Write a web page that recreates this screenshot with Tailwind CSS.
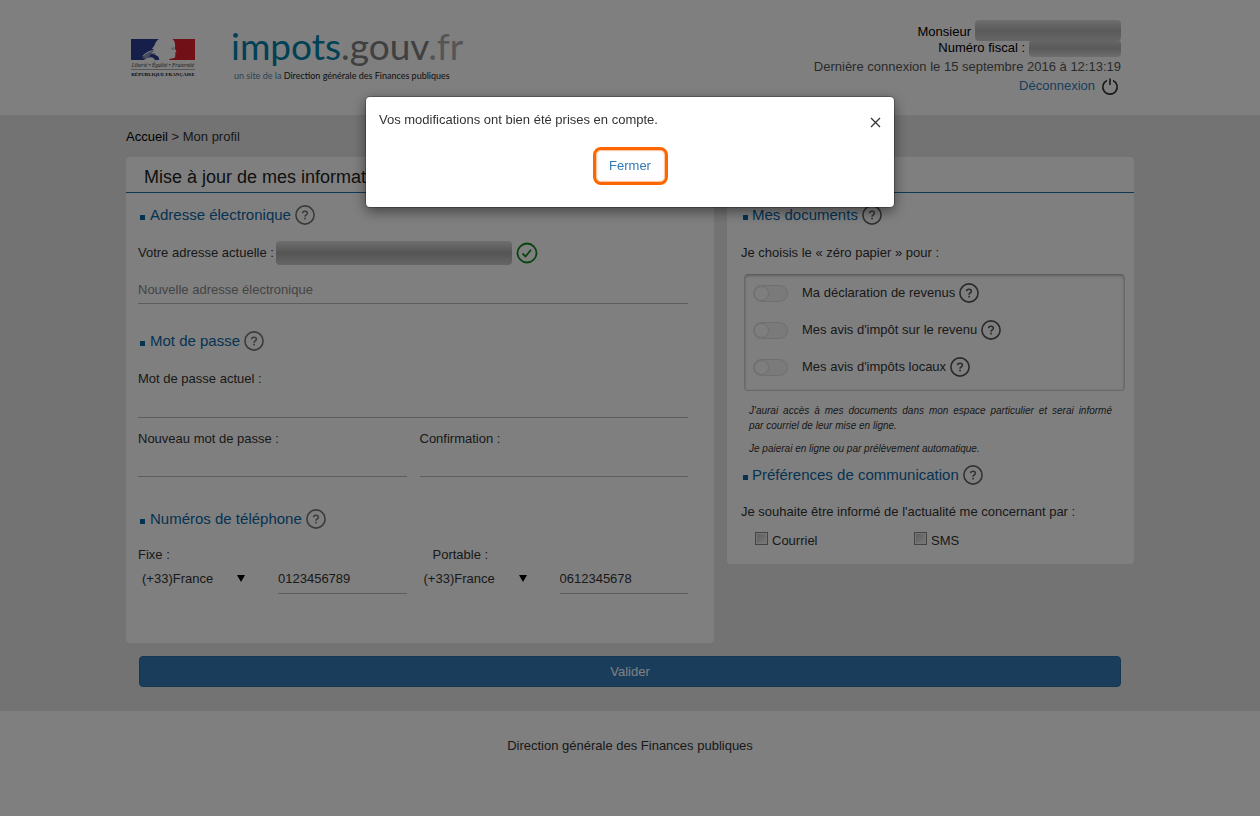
<!DOCTYPE html>
<html lang="fr">
<head>
<meta charset="utf-8">
<meta name="viewport" content="width=device-width, initial-scale=1">
<title>impots.gouv.fr - Mon profil</title>
<script src="https://cdn.jsdelivr.net/npm/@tailwindcss/browser@4"></script>
</head>
<body class="min-h-screen bg-white font-['Liberation_Sans',Arial,sans-serif] text-[13px] leading-5 text-[#333]">

<svg class="hidden" aria-hidden="true">
  <symbol id="help" viewBox="0 0 20 20">
    <circle cx="10" cy="10" r="9.100" fill="none" stroke="currentColor" stroke-width="1.600"/>
    <path d="M7.600 8.300c0-1.300 1-2.100 2.400-2.100s2.400.8 2.400 2c0 .9-.5 1.300-1.200 1.800-.8.5-1.200.9-1.200 1.800" fill="none" stroke="currentColor" stroke-width="1.500"/>
    <rect x="9.200" y="12.800" width="1.700" height="1.600" fill="currentColor"/>
  </symbol>
</svg>

<header class="h-[115px] bg-white">
  <div class="mx-auto flex max-w-[1008px] justify-between">
    <a href="#" class="flex pl-1 pt-6" aria-label="impots.gouv.fr">
      <svg class="mt-[14px] h-[42px] w-[68px] shrink-0" viewBox="0 0 68 42" role="img" aria-label="République Française">
        <path d="M1 1H29C26.500 2.500 25 5 24.500 7.500L22 10.500L24 12L21 12.500C18 13 15 15.500 12 18.500L16 17.500L13 20.500L17 19.500L14 22H1Z" fill="#2c3f92"/>
        <path d="M12.500 19.500C16 15 20 13 24.500 12.500L21 15.500L26 15L22 17.500L28 18.500L29 22H25L22 19.500L15 20.500Z" fill="#8b97c4"/>
        <path d="M21 16l4 .5 3.500 2.500.8 3h-4l-1.800-2.500-4.500-1z" fill="#2c3f92"/>
        <path d="M42.500 1H65V22H39C39.500 21 41 20.500 43 20.300C45 20 45.500 19 45.200 17.500L45.500 16L45 15L46.500 13.500L44.700 10.500L45.200 8C45.200 5 44.500 2.500 42.500 1Z" fill="#e2202c"/>
        <path d="M41.500 10.500l2.300-.7M42.500 11.500l1 .2" fill="none" stroke="#666" stroke-width=".7"/>
        <text x="33" y="29" text-anchor="middle" font-family="Liberation Serif, serif" font-style="italic" font-size="5.400" fill="#333">Liberté • Égalité • Fraternité</text>
        <path d="M1 31.500H65" stroke="#777" stroke-width=".6"/>
        <text x="33" y="38" text-anchor="middle" font-family="Liberation Serif, serif" font-weight="bold" font-size="5" fill="#111">RÉPUBLIQUE FRANÇAISE</text>
      </svg>
      <span class="ml-[33px] block font-['Lato',sans-serif]">
        <span class="block whitespace-nowrap text-[37px] leading-[44px] text-[#808080]"><span class="text-[#0082ad]">impots</span>.gouv<span class="text-[#aaa]">.fr</span></span>
        <span class="block whitespace-nowrap pl-[3px] text-[9px] leading-4 text-[#222]"><span class="text-[#5d87ad]">un site de la</span> Direction générale des Finances publiques</span>
      </span>
    </a>
    <div class="flex flex-col items-end pt-6 pr-[13px] leading-4">
      <p class="flex text-black">Monsieur <span class="-mt-1 ml-1 h-[21px] w-[146px] rounded-sm bg-linear-to-b from-[#ddd] via-[#b5b5b5] to-[#ccc]"></span></p>
      <p class="-mt-px flex text-black">Numéro fiscal : <span class="ml-1 h-[17px] w-[92px] rounded-sm bg-linear-to-b from-[#ccc] via-[#b5b5b5] to-[#ddd]"></span></p>
      <p class="mt-0.5 leading-4 text-[#555]">Dernière connexion le 15 septembre 2016 à 12:13:19</p>
      <a href="#" class="mt-px flex items-center gap-1.5 pr-0.5 leading-5 text-[#337ab7]">Déconnexion
        <svg class="mt-0.5 size-[18px]" viewBox="0 0 18 18" fill="none" stroke="#333" stroke-width="1.600" aria-hidden="true"><path d="M6 2.400A7.200 7.200 0 1 0 12 2.400M9 .5V7"/></svg>
      </a>
    </div>
  </div>
</header>

<main class="bg-[#e6e6e6] pt-3 pb-6">
  <form class="mx-auto max-w-[1008px]">
    <nav><a href="#" class="text-black">Accueil</a> &gt; Mon profil</nav>
    <h1 class="mt-2.5 rounded-t bg-white pt-2 pb-[3px] pl-[18px] text-[18px] leading-6 text-[#222]">Mise à jour de mes informations</h1>
    <div class="h-px bg-[#1a72ad]"></div>

    <div class="grid grid-cols-[588fr_407fr] items-start gap-x-[13px]">
      <section class="rounded-b bg-white pt-3 pr-[26px] pb-[49px] pl-3">
        <h2 class="flex items-center text-[15px] text-[#0b66a3]"><span class="mt-1 mr-[5px] ml-0.5 size-[5px] bg-[#0b66a3]"></span>Adresse électronique<button type="button" class="ml-1 text-[#777]" aria-label="Aide"><svg class="size-5"><use href="#help"/></svg></button></h2>
        <div class="mt-4 flex items-center">Votre adresse actuelle :<span class="ml-0.5 h-6 w-[236px] rounded bg-linear-to-b from-[#ddd] via-[#aaa] to-[#ccc]"></span>
          <svg class="ml-1 size-[22px]" viewBox="0 0 22 22" fill="none" stroke="#118a1c" stroke-width="1.800" role="img" aria-label="Adresse valide"><circle cx="11" cy="11" r="9.500"/><path d="M6.500 11.500l3 3L15 7.800"/></svg>
        </div>
        <input type="email" aria-label="Nouvelle adresse électronique" placeholder="Nouvelle adresse électronique" class="mt-3 block h-[27px] w-full border-b border-[#bbb] pb-0.5 placeholder:text-[#888]">

        <h2 class="mt-[27px] flex items-center text-[15px] text-[#0b66a3]"><span class="mt-1 mr-[5px] ml-0.5 size-[5px] bg-[#0b66a3]"></span>Mot de passe<button type="button" class="ml-1 text-[#777]" aria-label="Aide"><svg class="size-5"><use href="#help"/></svg></button></h2>
        <label for="pw" class="mt-[18px] block">Mot de passe actuel :</label>
        <input id="pw" type="password" class="block h-[29px] w-full border-b border-[#bbb]">
        <div class="mt-[11px] grid grid-cols-2 gap-x-[13px]">
          <div><label for="pw1" class="block">Nouveau mot de passe :</label><input id="pw1" type="password" class="block h-7 w-full border-b border-[#bbb]"></div>
          <div><label for="pw2" class="block">Confirmation :</label><input id="pw2" type="password" class="block h-7 w-full border-b border-[#bbb]"></div>
        </div>

        <h2 class="mt-8 flex items-center text-[15px] text-[#0b66a3]"><span class="mt-1 mr-[5px] ml-0.5 size-[5px] bg-[#0b66a3]"></span>Numéros de téléphone<button type="button" class="ml-1 text-[#777]" aria-label="Aide"><svg class="size-5"><use href="#help"/></svg></button></h2>
        <div class="mt-4 grid grid-cols-2 gap-x-[13px]">
          <div>
            <label for="fixe" class="block">Fixe :</label>
            <div class="flex">
              <div class="relative w-[140px]">
                <select aria-label="Indicatif fixe" class="h-7 w-full appearance-none pl-1"><option>(+33)France</option></select>
                <svg class="pointer-events-none absolute top-2.5 left-[99px] h-[7px] w-2" viewBox="0 0 8 7" aria-hidden="true"><path d="M0 0H8L4 7Z" fill="#000"/></svg>
              </div>
              <input id="fixe" type="tel" value="0123456789" class="h-[29px] min-w-0 flex-1 border-b border-[#bbb] pb-0.5">
            </div>
          </div>
          <div>
            <label for="mob" class="block pl-[13px]">Portable :</label>
            <div class="flex">
              <div class="relative w-[140px]">
                <select aria-label="Indicatif portable" class="h-7 w-full appearance-none pl-1"><option>(+33)France</option></select>
                <svg class="pointer-events-none absolute top-2.5 left-[99px] h-[7px] w-2" viewBox="0 0 8 7" aria-hidden="true"><path d="M0 0H8L4 7Z" fill="#000"/></svg>
              </div>
              <input id="mob" type="tel" value="0612345678" class="h-[29px] min-w-0 flex-1 border-b border-[#bbb] pb-0.5">
            </div>
          </div>
        </div>
      </section>

      <section class="rounded-b bg-white pt-3 pr-[9px] pb-[13px] pl-[14px]">
        <h2 class="flex items-center text-[15px] text-[#0b66a3]"><span class="mt-1 mr-1 ml-0.5 size-[5px] bg-[#0b66a3]"></span>Mes documents<button type="button" class="ml-1 text-[#666]" aria-label="Aide"><svg class="size-5"><use href="#help"/></svg></button></h2>
        <p class="mt-[18px]">Je choisis le « zéro papier » pour :</p>
        <div class="mt-[11px] ml-[3px] flex flex-col gap-[17px] rounded-sm border border-[#d0d0d0] border-t-[#bbb] pt-2 pb-[13px] pl-2 shadow-[inset_0_1px_3px_0_#bbb]">
          <div class="flex items-center"><input id="t1" type="checkbox" role="switch" class="h-[17px] w-[35px] appearance-none rounded-full border border-[#dedede] bg-[#f4f4f4] before:block before:size-[15px] before:rounded-full before:border before:border-[#dedede] before:bg-[#fdfdfd]"><label for="t1" class="ml-[14px]">Ma déclaration de revenus</label><button type="button" class="ml-1 text-[#555]" aria-label="Aide"><svg class="size-5"><use href="#help"/></svg></button></div>
          <div class="flex items-center"><input id="t2" type="checkbox" role="switch" class="h-[17px] w-[35px] appearance-none rounded-full border border-[#dedede] bg-[#f4f4f4] before:block before:size-[15px] before:rounded-full before:border before:border-[#dedede] before:bg-[#fdfdfd]"><label for="t2" class="ml-[14px]">Mes avis d'impôt sur le revenu</label><button type="button" class="ml-1 text-[#555]" aria-label="Aide"><svg class="size-5"><use href="#help"/></svg></button></div>
          <div class="flex items-center"><input id="t3" type="checkbox" role="switch" class="h-[17px] w-[35px] appearance-none rounded-full border border-[#dedede] bg-[#f4f4f4] before:block before:size-[15px] before:rounded-full before:border before:border-[#dedede] before:bg-[#fdfdfd]"><label for="t3" class="ml-[14px]">Mes avis d'impôts locaux</label><button type="button" class="ml-1 text-[#555]" aria-label="Aide"><svg class="size-5"><use href="#help"/></svg></button></div>
        </div>
        <div class="mt-3 mr-[13px] ml-2 text-[10px] leading-[15px] italic">
          <p class="text-justify">J'aurai accès à mes documents dans mon espace particulier et serai informé par&nbsp;courriel de leur mise en ligne.</p>
          <p class="mt-2">Je paierai en ligne ou par prélèvement automatique.</p>
        </div>
        <h2 class="mt-[9px] flex items-center text-[15px] text-[#0b66a3]"><span class="mt-1 mr-1 ml-0.5 size-[5px] bg-[#0b66a3]"></span>Préférences de communication<button type="button" class="ml-1 text-[#666]" aria-label="Aide"><svg class="size-5"><use href="#help"/></svg></button></h2>
        <p class="mt-[17px]">Je souhaite être informé de l'actualité me concernant par :</p>
        <div class="mt-[9px] ml-[14px] flex">
          <label class="flex w-[159px] gap-1"><input type="checkbox" class="mt-px size-[13px] appearance-none border border-[#888] bg-linear-to-br from-[#bbb] to-[#f4f4f4] shadow-[inset_0_0_0_1px_#eee]">Courriel</label>
          <label class="flex gap-1"><input type="checkbox" class="mt-px size-[13px] appearance-none border border-[#888] bg-linear-to-br from-[#bbb] to-[#f4f4f4] shadow-[inset_0_0_0_1px_#eee]">SMS</label>
        </div>
      </section>
    </div>

    <div class="mt-[13px] px-[13px]"><button type="submit" class="block h-[31px] w-full rounded-sm border border-[#2e6da4] bg-[#337ab7] text-white">Valider</button></div>
  </form>
</main>

<footer class="bg-white pt-[25px] pb-6 text-center">Direction générale des Finances publiques</footer>

<div class="fixed inset-0 flex items-start justify-center bg-black/50 pt-[97px]">
  <div role="dialog" aria-modal="true" aria-labelledby="msg" class="w-[528px] rounded bg-white pt-[13px] pr-[13px] pb-[22px] pl-[13px] shadow-[0_4px_14px_rgba(0,0,0,0.5),0_0_0_1px_rgba(0,0,0,0.25)]">
    <div class="flex justify-between">
      <p id="msg">Vos modifications ont bien été prises en compte.</p>
      <button type="button" aria-label="Fermer la fenêtre" class="mt-[5px]"><svg class="size-[11px]" viewBox="0 0 11 11" stroke="#333" stroke-width="1.300" aria-hidden="true"><path d="M1 1L10 10M10 1L1 10"/></svg></button>
    </div>
    <div class="mt-[17px] flex justify-center"><button type="button" class="h-[38px] w-[75px] rounded-lg border-[3px] border-[#ff6600] text-[#337ab7] shadow-[inset_0_0_1px_1px_#ffc299]">Fermer</button></div>
  </div>
</div>
</body>
</html>
